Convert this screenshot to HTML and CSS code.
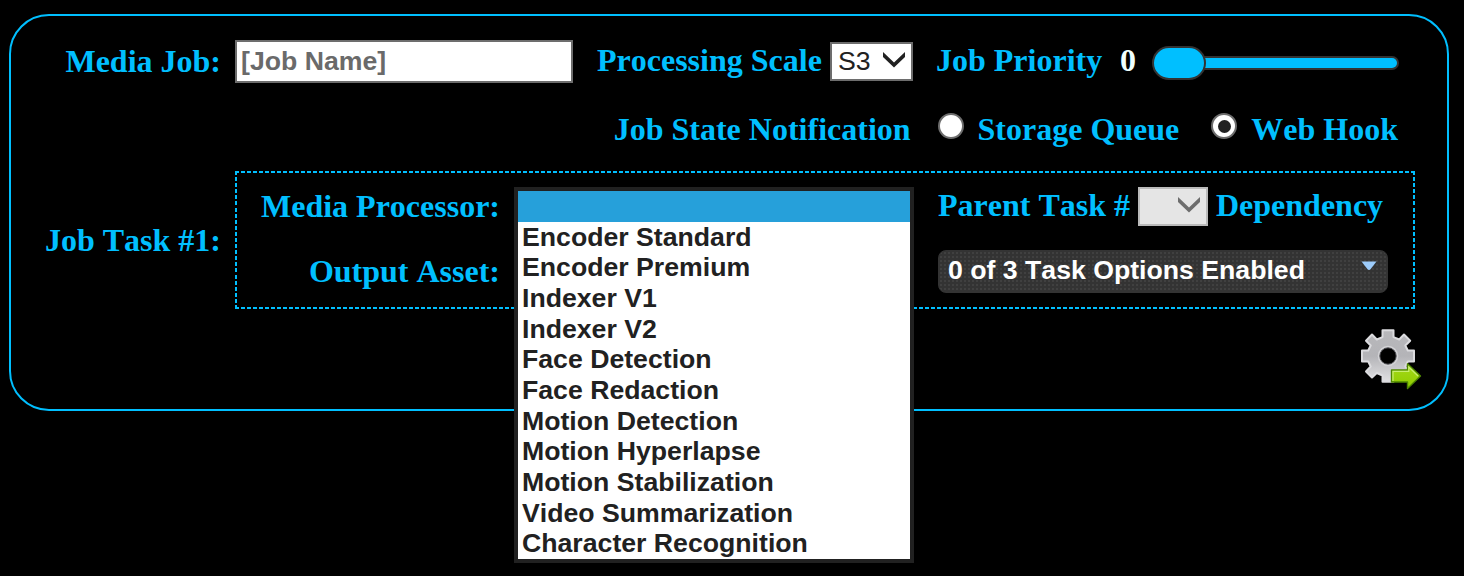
FILE: index.html
```html
<!DOCTYPE html>
<html lang="en">
<head>
<meta charset="utf-8">
<title>Media Job</title>
<link rel="stylesheet" href="styles.css">
</head>
<body>
<main class="card">
  <div class="row row-job">
    <label class="row-label" for="job">Media Job:</label>
    <input class="job-name" id="job" type="text" placeholder="[Job Name]">
    <span class="scale-label">Processing Scale</span>
    <div class="select">S3
      <svg class="chevron" viewBox="0 0 22 16" width="22" height="16"><path d="M0 0 11 10.4 22 0V5L11 15.6 0 5Z"/></svg>
    </div>
    <span class="priority-label">Job Priority</span>
    <span class="priority-value">0</span>
    <div class="slider"><div class="thumb"></div><div class="track"></div></div>
  </div>
  <div class="row-notify">
    <span class="notify-label">Job State Notification</span>
    <span class="radio"></span><span class="radio-label">Storage Queue</span>
    <span class="radio radio-second checked"></span><span class="radio-label">Web Hook</span>
  </div>
  <div class="row row-task">
    <span class="row-label task-label">Job Task #1:</span>
    <section class="task">
      <div class="task-names">
        <span>Media Processor:</span>
        <span>Output Asset:</span>
      </div>
      <div class="processor">
        <ul class="menu">
          <li class="active"></li>
          <li>Encoder Standard</li>
          <li>Encoder Premium</li>
          <li>Indexer V1</li>
          <li>Indexer V2</li>
          <li>Face Detection</li>
          <li>Face Redaction</li>
          <li>Motion Detection</li>
          <li>Motion Hyperlapse</li>
          <li>Motion Stabilization</li>
          <li>Video Summarization</li>
          <li>Character Recognition</li>
        </ul>
      </div>
      <div class="task-side">
        <div class="parent">
          <span>Parent Task #</span>
          <div class="select disabled">
            <svg class="chevron" viewBox="0 0 22 16" width="22" height="16"><path d="M0 0 11 10.4 22 0V5L11 15.6 0 5Z"/></svg>
          </div>
          <span>Dependency</span>
        </div>
        <div class="options">
          <span>0 of 3 Task Options Enabled</span>
          <svg class="caret" viewBox="0 0 16 10" width="16" height="10"><path d="M.5 .5h15L9.5 8.2Q8 9.6 6.5 8.2Z"/></svg>
        </div>
      </div>
    </section>
  </div>
  <div class="actions">
    <svg viewBox="0 0 62 62" width="62" height="62">
      <defs>
        <linearGradient id="metal" x1="0" y1="0" x2="0" y2="1"><stop offset="0" stop-color="#b8b8bb"/><stop offset=".5" stop-color="#b4b4b8"/><stop offset="1" stop-color="#e0e0e2"/></linearGradient>
        <linearGradient id="green" x1="0" y1="0" x2="0" y2="1"><stop offset="0" stop-color="#a5da18"/><stop offset="1" stop-color="#8ecb00"/></linearGradient>
      </defs>
      <path fill="url(#metal)" stroke="#dcdcdf" stroke-width="2" stroke-linejoin="round" d="M22.5 1.3H33.5V8.1L39.2 10.5 44 5.5 50.2 11.7 45.3 16.5 47.8 21.5H54V32.5H47.8L45.3 37.5 50.2 42.5 44 48.5 39.2 44 33.5 46.5V52.7H22.5V46.5L16.8 44 12 48.5 6 42.5 10.7 37.5 8.2 32.5H2V21.5H8.2L10.7 16.5 6 11.7 12 5.5 16.8 10.5 22.5 8.1Z"/>
      <circle cx="28" cy="27" r="9.2" fill="#000" stroke="#d2d2d5" stroke-width="2.2"/>
      <circle cx="28" cy="27" r="8.2" fill="#000" stroke="#55555a" stroke-width="1"/>
      <path fill="url(#green)" stroke="#4d8600" stroke-width="1.4" stroke-linejoin="round" d="M31.5 41H47.5V34.7L60.5 47 47.5 59.5V53H31.5Z"/>
      <path fill="none" stroke="#c8ee72" stroke-width="1.2" d="M33 52V42.4H48.8V38L58 47"/>
    </svg>
  </div>
</main>
</body>
</html>
```
FILE: styles.css
```css
* { box-sizing: border-box; }
body {
  margin: 0;
  padding: 14px 15px 0 9px;
  height: 576px;
  overflow: hidden;
  background: #000;
  color: #00bfff;
  font: bold 32px/36px "Liberation Serif", "Times New Roman", serif;
  font-kerning: none;
  white-space: nowrap;
}
.card {
  height: 397px;
  padding-top: 24px;
  border: 2px solid #00bfff;
  border-radius: 40px;
}
.row { display: flex; align-items: flex-start; }
.row-label { width: 210px; margin-right: 14px; text-align: right; }
.row-job { height: 70px; }
.row-job .row-label { padding-top: 3px; }
.job-name {
  width: 338px;
  height: 43px;
  padding: 0 4px;
  border: 2px solid #6d6d6d;
  background: #fff;
  font: bold 26.67px "Liberation Sans", Arial, sans-serif;
  font-kerning: none;
}
.job-name::placeholder { color: #6a6a6a; opacity: 1; }
.scale-label { width: 225px; margin: 2px 8px 0 24px; }
.select {
  display: flex;
  justify-content: space-between;
  width: 83px;
  height: 39px;
  padding: 0 6px;
  border: 2px solid #6d6d6d;
  background: #fff;
  color: #212121;
  font: 26.67px/34px "Liberation Sans", Arial, sans-serif;
}
.row-job .select { margin-top: 2px; }
.chevron { margin-top: 8px; fill: currentColor; }
.disabled { width: 70px; justify-content: flex-end; border-color: #bababa; background: #e5e5e5; color: #6d6d6d; }
.priority-label { width: 166px; margin: 2px 0 0 23px; }
.priority-value { width: 16px; margin: 2px 16px 0 18px; color: #f0ffff; }
.slider { display: flex; align-items: center; width: 247px; height: 34px; margin-top: 6px; }
.track { flex: 1; height: 14px; border: 2px solid #333; border-left: 0; border-radius: 0 7px 7px 0; background: #00bfff; }
.thumb { width: 54px; height: 34px; margin-right: -2px; border: 2px solid #333; border-radius: 17px; background: #00bfff; z-index: 1; }

.row-notify { display: flex; justify-content: flex-end; height: 61px; padding-right: 49px; }
.notify-label, .radio-label { padding-top: 1px; }
.notify-label { margin-right: 27px; }
.radio {
  display: grid;
  place-items: center;
  width: 26px;
  height: 26px;
  margin: 3px 14px 0 0;
  border: 2px solid #6d6d6d;
  border-radius: 50%;
  background: #fff;
}
.radio-second { margin-left: 32px; }
.checked::after { content: ""; width: 13px; height: 13px; border-radius: 50%; background: #212121; }

.task-label { padding-top: 51px; }
.task {
  display: flex;
  width: 1180px;
  height: 138px;
  padding: 16px 0 0 25px;
  background:
    repeating-linear-gradient(90deg, #00bfff 0 4px, transparent 4px 6px) top / 100% 2px no-repeat,
    repeating-linear-gradient(90deg, #00bfff 0 4px, transparent 4px 6px) bottom / 100% 2px no-repeat,
    repeating-linear-gradient(#00bfff 0 4px, transparent 4px 6.09px) left / 2px 100% no-repeat,
    repeating-linear-gradient(#00bfff 0 4px, transparent 4px 6.09px) right / 2px 100% no-repeat;
}
.task-names { display: flex; flex-direction: column; gap: 29px; width: 240px; padding-top: 1px; text-align: right; }
.processor { position: relative; width: 400px; margin: 0 24px 0 14px; }
.menu {
  position: absolute;
  top: 0;
  left: 0;
  width: 400px;
  margin: 0;
  padding: 0;
  border: 4px solid #212121;
  background: #fff;
  color: #212121;
  list-style: none;
  font: bold 26.67px/30px "Liberation Sans", Arial, sans-serif;
  font-kerning: none;
}
.menu li { height: 30.67px; padding-left: 4px; }
.menu .active { background: #26a0da; }
.parent { display: flex; gap: 8px; }
.options {
  display: flex;
  justify-content: space-between;
  width: 450px;
  height: 43px;
  margin-top: 24px;
  padding: 0 10px 0 9px;
  border: 1px solid #333;
  border-radius: 8px;
  background: radial-gradient(circle at 2px 2px, #404040 0 1px, #333 1.5px) 0 0 / 4px 4px;
  color: #fff;
  font: bold 26.67px/39px "Liberation Sans", Arial, sans-serif;
  font-kerning: none;
}
.caret { margin-top: 10px; fill: #9ccbfa; }

.actions { display: flex; justify-content: flex-end; margin-top: 20px; padding-right: 25px; }
```
